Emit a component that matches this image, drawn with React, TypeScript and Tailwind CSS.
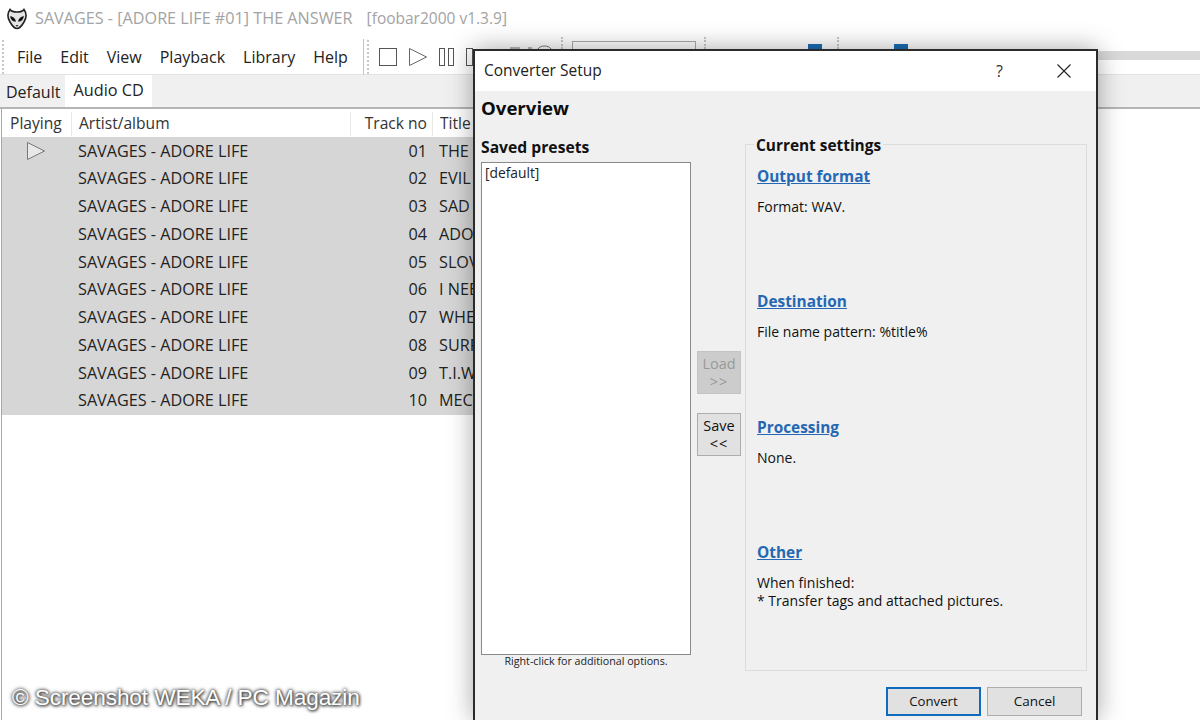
const font = { fontFamily: '"Open Sans", "Noto Sans", sans-serif' };

const tracks = [
  { no: "01", title: "THE" },
  { no: "02", title: "EVIL" },
  { no: "03", title: "SAD" },
  { no: "04", title: "ADO" },
  { no: "05", title: "SLOV" },
  { no: "06", title: "I NEE" },
  { no: "07", title: "WHE" },
  { no: "08", title: "SURF" },
  { no: "09", title: "T.I.W" },
  { no: "10", title: "MEC" },
];

const menu = ["File", "Edit", "View", "Playback", "Library", "Help"];

function Grip() {
  return <div className="h-[34px] w-[2px] shrink-0 border-l-2 border-dotted border-[#c8c8c8]" />;
}

function Alien() {
  return (
    <svg width="20" height="22" viewBox="0 0 20 22" className="shrink-0">
      <path d="M3 1.5 C4 3 5.5 4 10 4 C14.5 4 16 3 17 1.5 C19.5 5 19.5 10 17 14 C15 17.5 13 20.5 10 20.5 C7 20.5 5 17.5 3 14 C.5 10 .5 5 3 1.5Z" fill="#e4e4e4" stroke="#222" strokeWidth="1.6" />
      <path d="M3.2 8 C6 8.5 8.5 10.5 9 13.5 C6 14 3.4 11.5 3.2 8Z M16.8 8 C14 8.5 11.5 10.5 11 13.5 C14 14 16.6 11.5 16.8 8Z" fill="#111" />
      <path d="M8.5 17 H11.5 L10.5 18.5 H9.5Z" fill="#333" />
    </svg>
  );
}

function Transport() {
  return (
    <div className="flex items-center gap-[12px] pl-[10px]">
      <svg width="18" height="18" viewBox="0 0 18 18"><rect x=".5" y=".5" width="17" height="17" fill="none" stroke="#555" /></svg>
      <svg width="18" height="18" viewBox="0 0 18 18"><path d="M.5.5 L17.5 9 L.5 17.5Z" fill="none" stroke="#666" /></svg>
      <svg width="15" height="18" viewBox="0 0 15 18"><rect x=".5" y=".5" width="5" height="17" fill="none" stroke="#555" /><rect x="9.5" y=".5" width="5" height="17" fill="none" stroke="#555" /></svg>
      <svg width="18" height="18" viewBox="0 0 18 18"><rect x=".5" y=".5" width="6" height="17" fill="none" stroke="#555" /></svg>
    </div>
  );
}

function SectionLink({ label, children, className }: { label: string; children: React.ReactNode; className: string }) {
  return (
    <div className={className}>
      <div className="text-[15.4px] font-bold leading-[20px] text-[#2468b4] underline">{label}</div>
      <div className="mt-[11px] text-[14px] leading-[18px] text-[#111]">{children}</div>
    </div>
  );
}

function Dialog() {
  return (
    <div className="absolute left-[473px] top-[49px] flex h-[671px] w-[625px] flex-col border-2 border-b-0 border-[#2b2b2b] bg-[#f0f0f0] shadow-[0_0_24px_rgba(0,0,0,0.35)]">
      <div className="flex h-[40px] shrink-0 items-center justify-between bg-white pl-[9px] pr-[25px]">
        <span className="text-[15.5px] text-[#222]">Converter Setup</span>
        <div className="flex items-center gap-[54px]">
          <span className="text-[16px] text-[#333]">?</span>
          <svg width="14" height="14" viewBox="0 0 14 14"><path d="M.5.5 L13.5 13.5 M13.5.5 L.5 13.5" stroke="#222" strokeWidth="1.1" /></svg>
        </div>
      </div>
      <div className="flex-1 pl-[6px] pr-[9px]">
        <h1 className="mt-[4px] h-[31px] text-[18.6px] font-bold leading-[26px] text-[#0c0c0c]">Overview</h1>
        <div className="mt-[7px] flex">
          <div className="w-[210px] shrink-0">
            <div className="pt-[4px] text-[15.7px] font-bold leading-[20px] text-[#111]">Saved presets</div>
            <div className="mt-[5px] h-[493px] border border-[#8a8a8a] bg-white px-[3px] py-[1px] text-[13.8px] leading-[18px] text-[#222]">[default]</div>
            <div className="text-center text-[10.7px] leading-[12px] text-[#222]">Right-click for additional options.</div>
          </div>
          <div className="flex w-[54px] shrink-0 flex-col gap-[19px] pl-[6px] pt-[218px]">
            <div className="flex h-[43px] w-[44px] flex-col items-center justify-center border border-[#c4c4c4] bg-[#cccccc] text-[14.5px] leading-[18px] text-[#9a9a9a]">
              <span>Load</span>
              <span className="tracking-[1px]">&gt;&gt;</span>
            </div>
            <div className="flex h-[43px] w-[44px] flex-col items-center justify-center border border-[#adadad] bg-[#e1e1e1] text-[14.5px] leading-[18px] text-[#111]">
              <span>Save</span>
              <span className="tracking-[1px]">&lt;&lt;</span>
            </div>
          </div>
          <div className="relative mt-[11px] h-[527px] w-[342px] shrink-0 border border-[#dcdcdc]">
            <div className="absolute -top-[9px] left-[8px] bg-[#f0f0f0] px-[2px] text-[15.4px] font-bold leading-[20px] text-[#111]">Current settings</div>
            <SectionLink label="Output format" className="pl-[11px] pt-[22px]">Format: WAV.</SectionLink>
            <SectionLink label="Destination" className="pl-[11px] pt-[76px]">File name pattern: %title%</SectionLink>
            <SectionLink label="Processing" className="pl-[11px] pt-[77px]">None.</SectionLink>
            <SectionLink label="Other" className="pl-[11px] pt-[76px]">
              When finished:
              <br />* Transfer tags and attached pictures.
            </SectionLink>
          </div>
        </div>
        <div className="mt-[16px] flex justify-end gap-[6px] pr-[5px]">
          <div className="flex h-[29px] w-[95px] items-center justify-center border-2 border-[#0f6cbd] bg-[#e1e1e1] text-[13.2px] text-[#111]">Convert</div>
          <div className="flex h-[29px] w-[95px] items-center justify-center border border-[#adadad] bg-[#e1e1e1] text-[13.5px] text-[#111]">Cancel</div>
        </div>
      </div>
    </div>
  );
}

export default function App() {
  return (
    <div style={font} className="relative h-[720px] w-[1200px] overflow-hidden bg-white">
      {/* Title bar */}
      <div className="flex h-[37px] items-center gap-[8px] pl-[7px] text-[#a3a3a3]">
        <Alien />
        <span className="text-[16.2px]">SAVAGES - [ADORE LIFE #01] THE ANSWER</span>
        <span className="ml-[6px] text-[15.5px]">[foobar2000 v1.3.9]</span>
      </div>

      {/* Menu and toolbar */}
      <div className="flex h-[38px] items-center border-b border-[#e3e3e3] pl-[2px] pt-[2px]">
        <Grip />
        <div className="flex items-center gap-[18px] pl-[13px] text-[16px] text-[#222]">
          {menu.map((item) => (
            <span key={item}>{item}</span>
          ))}
        </div>
        <div className="ml-[15px] h-[36px] w-px bg-[#c4c4c4]" />
        <div className="ml-[3px]"><Grip /></div>
        <Transport />
        <div className="ml-auto flex h-full w-[103px] flex-col pt-[12px]">
          <div className="h-[9px] bg-[#d9d9d9]" />
        </div>
      </div>

      {/* Playlist tabs */}
      <div className="flex h-[34px] items-end border-b-2 border-[#b5b5b5] bg-[#f0f0f0] pl-[6px]">
        <span className="pb-[3px] pr-[5px] text-[16px] text-[#222]">Default</span>
        <span className="flex h-[32px] items-center bg-white px-[8px] pb-[2px] text-[16.3px] text-[#222]">Audio CD</span>
      </div>

      {/* Playlist */}
      <div className="ml-[1px] h-[611px] w-[480px] border-l border-[#a8a8a8]">
        <div className="flex h-[28px] items-center pt-[2px] text-[15.6px] text-[#333]">
          <span className="w-[70px] border-r border-[#e8e8e8] pl-[8px]">Playing</span>
          <span className="w-[279px] border-r border-[#e8e8e8] pl-[7px]">Artist/album</span>
          <span className="w-[82px] border-r border-[#e8e8e8] pr-[5px] text-right">Track no</span>
          <span className="pl-[7px]">Title</span>
        </div>
        {tracks.map((track, i) => (
          <div key={track.no} className="flex h-[27.75px] items-center bg-[#d6d6d6] text-[16.2px] text-[#222]">
            <span className="flex w-[70px] justify-center pr-[2px]">
              {i === 0 && (
                <svg width="18" height="18" viewBox="0 0 18 18"><path d="M.5.5 L17.5 9 L.5 17.5Z" fill="#e8e8e8" stroke="#777" /></svg>
              )}
            </span>
            <span className="w-[279px] pl-[6px]">SAVAGES - ADORE LIFE</span>
            <span className="w-[82px] pr-[6px] text-right">{track.no}</span>
            <span className="pl-[6px]">{track.title}</span>
          </div>
        ))}
      </div>

      {/* Toolbar bits peeking above the dialog */}
      <svg className="absolute left-[508px] top-[44px]" width="44" height="6" viewBox="0 0 44 6">
        <path d="M2 4 H12 M20 4 H24 M30 5 C32 1 41 1 43 5" fill="none" stroke="#777" strokeWidth="1" />
      </svg>
      <div className="absolute left-[561px] top-[37px] h-[12px] w-[2px] border-l-2 border-dotted border-[#c8c8c8]" />
      <div className="absolute left-[704px] top-[37px] h-[12px] w-[2px] border-l-2 border-dotted border-[#c8c8c8]" />
      <div className="absolute left-[837px] top-[37px] h-[12px] w-[2px] border-l-2 border-dotted border-[#c8c8c8]" />
      <div className="absolute left-[572px] top-[41px] h-[9px] w-[124px] border-l border-t border-r border-[#aaa]" />
      <div className="absolute left-[808px] top-[44px] h-[6px] w-[14px] bg-[#1a6db5]" />
      <div className="absolute left-[894px] top-[44px] h-[6px] w-[14px] bg-[#1a6db5]" />

      <Dialog />

      {/* Watermark */}
      <div className="absolute left-[12px] top-[684px] text-[22.6px] leading-[28px] tracking-[-0.1px] text-white [font-family:'Liberation_Sans',sans-serif] [text-shadow:0_0_3px_#444,0_0_4px_#555,1px_1px_3px_#444]">
        © Screenshot WEKA / PC Magazin
      </div>
    </div>
  );
}
